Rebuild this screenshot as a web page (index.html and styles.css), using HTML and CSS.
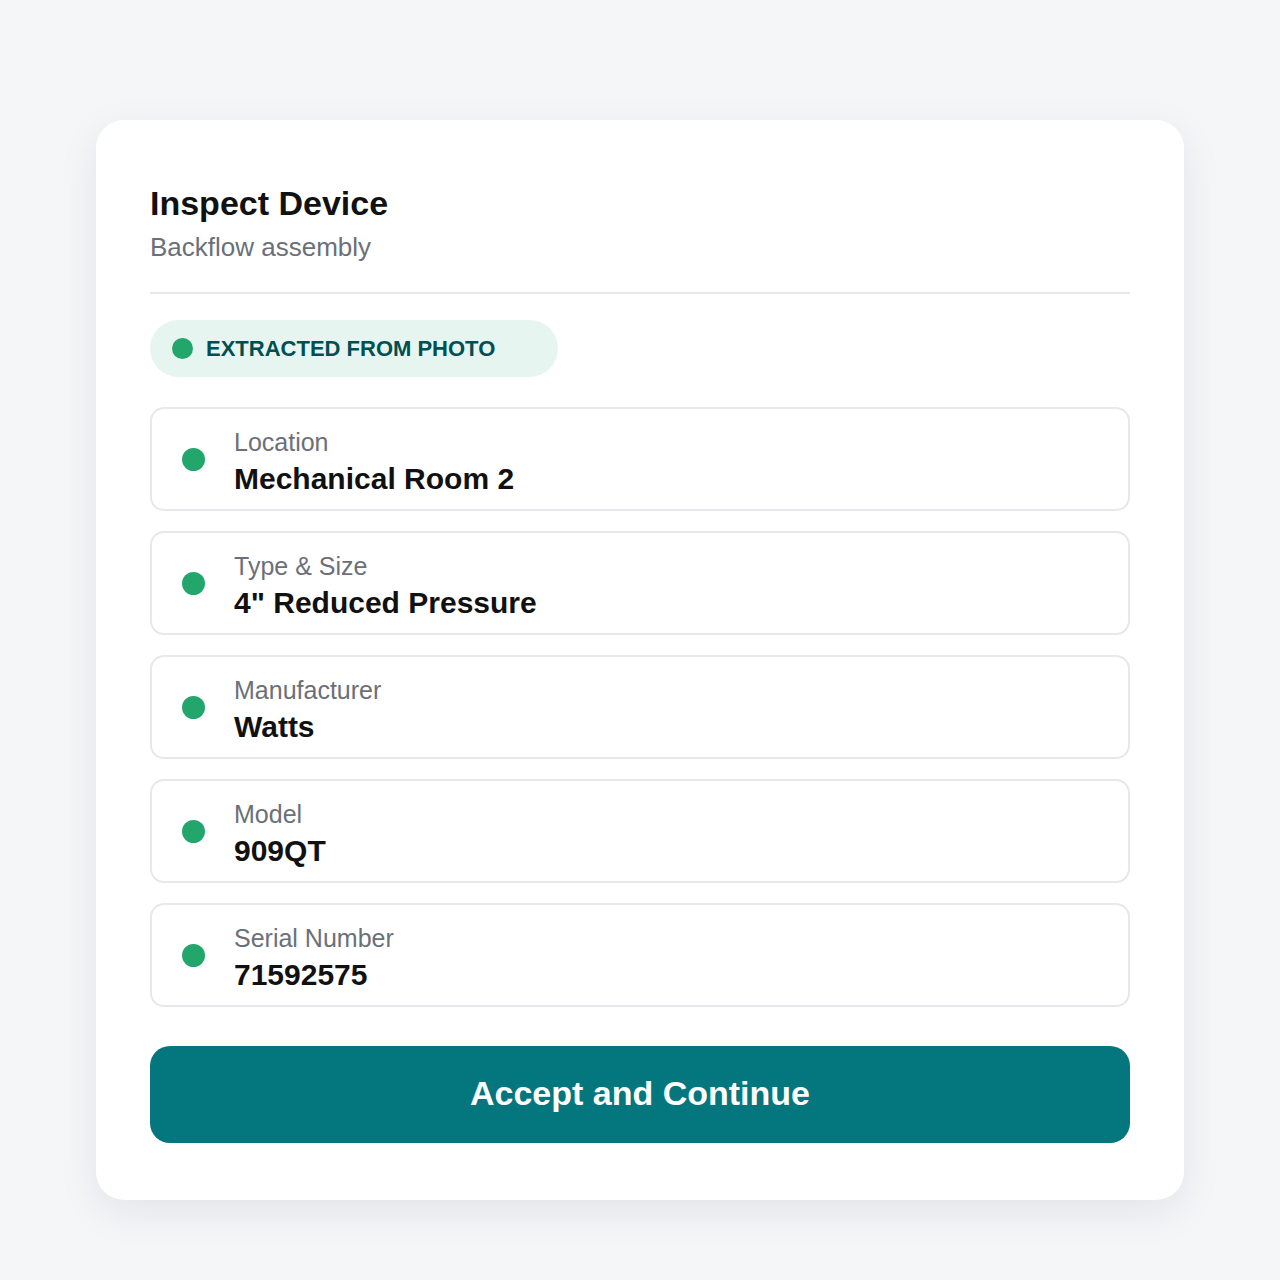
FILE: index.html
```html
<!DOCTYPE html>
<html lang="en">

    <head>
        <meta charset="UTF-8">
        <title>Inspect Device</title>
        <link rel="stylesheet" href="styles.css">
    </head>

    <body>
        <section class="inspect-card">

            <h1 class="title">Inspect Device</h1>
            <p class="subtitle">Backflow assembly</p>

            <hr class="divider">

            <div class="badge">
                <span class="dot badge-dot"></span>
                <span class="badge-text">EXTRACTED FROM PHOTO</span>
            </div>

            <div class="fields">
                <div class="field">
                    <span class="dot"></span>
                    <div class="field-text">
                        <div class="field-label">Location</div>
                        <div class="field-value">Mechanical Room 2</div>
                    </div>
                </div>

                <div class="field">
                    <span class="dot"></span>
                    <div class="field-text">
                        <div class="field-label">Type &amp; Size</div>
                        <div class="field-value">4" Reduced Pressure</div>
                    </div>
                </div>

                <div class="field">
                    <span class="dot"></span>
                    <div class="field-text">
                        <div class="field-label">Manufacturer</div>
                        <div class="field-value">Watts</div>
                    </div>
                </div>

                <div class="field">
                    <span class="dot"></span>
                    <div class="field-text">
                        <div class="field-label">Model</div>
                        <div class="field-value">909QT</div>
                    </div>
                </div>

                <div class="field">
                    <span class="dot"></span>
                    <div class="field-text">
                        <div class="field-label">Serial Number</div>
                        <div class="field-value">71592575</div>
                    </div>
                </div>
            </div>

            <button class="accept-btn">Accept and Continue</button>

        </section>
    </body>

</html>
```

FILE: styles.css
```css
* {
    padding: 0;
    margin: 0;
    box-sizing: border-box;
}

body {
    background-color: #f5f6f8;
    font-family: "Liberation Sans", Arial, sans-serif;
    padding-top: 120px;
    height: 1280px;
}

.inspect-card {
    width: 1088px;
    margin: 0 auto;
    padding: 63px 54px 57px;
    background-color: #fff;
    border-radius: 28px;
    box-shadow: 0 12px 40px rgba(20, 30, 50, 0.08);
}

.title {
    font-size: 34px;
    line-height: 40px;
    font-weight: bold;
    color: #111;
}

.subtitle {
    margin-top: 9px;
    font-size: 26px;
    line-height: 30px;
    color: #6b7078;
}

.divider {
    margin-top: 30px;
    border: 0;
    height: 2px;
    background-color: #e6e7ea;
}

.badge {
    margin-top: 26px;
    display: inline-flex;
    align-items: center;
    height: 57px;
    padding: 0 63px 0 22px;
    gap: 13px;
    border-radius: 29px;
    background-color: #e7f5f1;
}

.dot {
    width: 23px;
    height: 23px;
    border-radius: 50%;
    background-color: #22a66c;
    flex-shrink: 0;
}

.badge-dot {
    width: 21px;
    height: 21px;
}

.badge-text {
    font-size: 22px;
    font-weight: bold;
    color: #014f51;
}

.fields {
    margin-top: 30px;
    display: flex;
    flex-direction: column;
    gap: 20px;
}

.field {
    display: flex;
    align-items: center;
    gap: 29px;
    height: 104px;
    padding: 0 30px;
    border: 2px solid #e7e8eb;
    border-radius: 14px;
}

/* text sits a little lower than the dot */
.field-text {
    display: flex;
    flex-direction: column;
    gap: 4px;
    padding-top: 6px;
}

.field-label {
    font-size: 25px;
    line-height: 30px;
    color: #6b7078;
}

.field-value {
    font-size: 30px;
    line-height: 36px;
    font-weight: bold;
    color: #111;
}

.accept-btn {
    display: block;
    width: 100%;
    height: 97px;
    margin-top: 39px;
    border: 0;
    border-radius: 20px;
    background-color: #04767e;
    color: #fff;
    font-family: "Liberation Sans", Arial, sans-serif;
    font-size: 34px;
    font-weight: bold;
    padding-bottom: 2px;
}
```
